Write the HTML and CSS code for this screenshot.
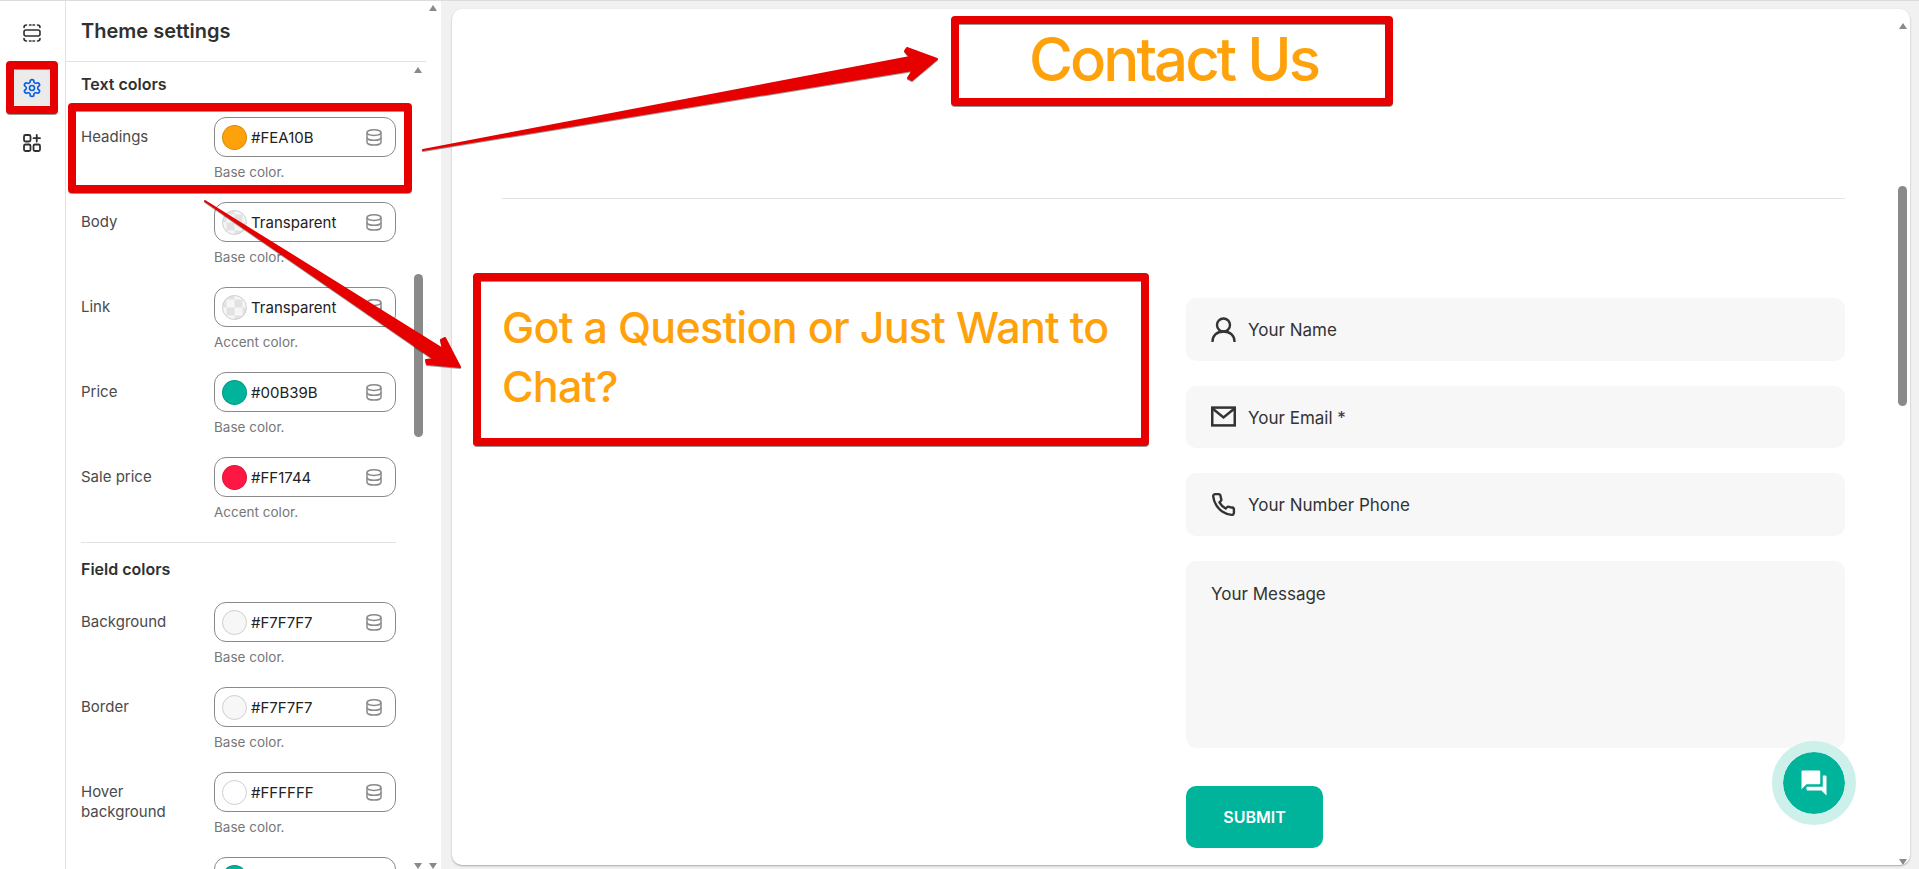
FILE: index.html
```html
<!DOCTYPE html>
<html lang="en">
<head>
  <meta charset="UTF-8" />
  <title>Theme settings</title>
  <link rel="stylesheet" href="styles.css">
</head>
<body>

  <svg class="defs" width="0" height="0">
    <symbol id="db" viewBox="0 0 16 17">
      <g fill="none" stroke="currentColor" stroke-width="1.5">
        <ellipse cx="8" cy="3.6" rx="7" ry="2.8" />
        <path d="M1 3.6v9.6c0 1.6 3.1 2.9 7 2.9s7-1.300 7-2.900V3.600" />
        <path d="M1 8.400c0 1.600 3.100 2.900 7 2.900s7-1.300 7-2.900" />
      </g>
    </symbol>
  </svg>

  <div class="app">

    <nav class="rail">
      <a class="rail-btn">
        <svg width="20" height="20" viewBox="0 0 20 20" fill="none" stroke="#303030" stroke-width="1.600" stroke-linecap="round">
          <rect x="2" y="7" width="16" height="6" rx="2" />
          <path d="M2 4.500c0-1.400.9-2.500 2.500-2.500M7.500 2h1.500M11 2h1.500M15.500 2c1.600 0 2.500 1.100 2.500 2.500" />
          <path d="M2 15.500c0 1.400.9 2.500 2.500 2.500M7.500 18h1.500M11 18h1.500M15.500 18c1.600 0 2.500-1.100 2.500-2.500" />
        </svg>
      </a>
      <a class="rail-btn active">
        <svg width="20" height="20" viewBox="0 0 24 24" fill="none" stroke="#0b5fdc" stroke-width="2" stroke-linecap="round" stroke-linejoin="round">
          <path d="M12.220 2h-.44a2 2 0 0 0-2 2v.18a2 2 0 0 1-1 1.730l-.43.25a2 2 0 0 1-2 0l-.15-.08a2 2 0 0 0-2.730.73l-.22.38a2 2 0 0 0 .73 2.730l.15.1a2 2 0 0 1 1 1.720v.51a2 2 0 0 1-1 1.740l-.15.09a2 2 0 0 0-.73 2.730l.22.38a2 2 0 0 0 2.730.73l.15-.08a2 2 0 0 1 2 0l.43.25a2 2 0 0 1 1 1.730V20a2 2 0 0 0 2 2h.44a2 2 0 0 0 2-2v-.18a2 2 0 0 1 1-1.730l.43-.25a2 2 0 0 1 2 0l.15.08a2 2 0 0 0 2.730-.73l.22-.39a2 2 0 0 0-.73-2.730l-.15-.08a2 2 0 0 1-1-1.740v-.5a2 2 0 0 1 1-1.740l.15-.09a2 2 0 0 0 .73-2.730l-.22-.38a2 2 0 0 0-2.730-.73l-.15.08a2 2 0 0 1-2 0l-.43-.25a2 2 0 0 1-1-1.730V4a2 2 0 0 0-2-2z" />
          <circle cx="12" cy="12" r="3" />
        </svg>
      </a>
      <a class="rail-btn">
        <svg width="20" height="20" viewBox="0 0 20 20" fill="none" stroke="#303030" stroke-width="1.800" stroke-linecap="round">
          <rect x="2" y="2" width="6.500" height="6.500" rx="1.500" />
          <rect x="2" y="11.500" width="6.500" height="6.500" rx="1.500" />
          <rect x="11.500" y="11.500" width="6.500" height="6.500" rx="1.500" />
          <path d="M11.500 5.200h6.500M14.750 2v6.500" />
        </svg>
      </a>
    </nav>

    <aside class="sidebar">
      <h2 class="side-title">Theme settings</h2>

      <div class="side-scroll">
        <h3 class="group-title">Text colors</h3>

        <div class="setting">
          <label>Headings</label>
          <div>
            <div class="field"><span class="swatch orange"></span><span class="val">#FEA10B</span><svg class="db"><use href="#db" /></svg></div>
            <p class="help">Base color.</p>
          </div>
        </div>
        <div class="setting">
          <label>Body</label>
          <div>
            <div class="field"><span class="swatch clear"></span><span class="val">Transparent</span><svg class="db"><use href="#db" /></svg></div>
            <p class="help">Base color.</p>
          </div>
        </div>
        <div class="setting">
          <label>Link</label>
          <div>
            <div class="field"><span class="swatch clear"></span><span class="val">Transparent</span><svg class="db"><use href="#db" /></svg></div>
            <p class="help">Accent color.</p>
          </div>
        </div>
        <div class="setting">
          <label>Price</label>
          <div>
            <div class="field"><span class="swatch teal"></span><span class="val">#00B39B</span><svg class="db"><use href="#db" /></svg></div>
            <p class="help">Base color.</p>
          </div>
        </div>
        <div class="setting">
          <label>Sale price</label>
          <div>
            <div class="field"><span class="swatch red"></span><span class="val">#FF1744</span><svg class="db"><use href="#db" /></svg></div>
            <p class="help">Accent color.</p>
          </div>
        </div>

        <hr class="side-rule" />

        <h3 class="group-title">Field colors</h3>

        <div class="setting">
          <label>Background</label>
          <div>
            <div class="field"><span class="swatch grey"></span><span class="val">#F7F7F7</span><svg class="db"><use href="#db" /></svg></div>
            <p class="help">Base color.</p>
          </div>
        </div>
        <div class="setting">
          <label>Border</label>
          <div>
            <div class="field"><span class="swatch grey"></span><span class="val">#F7F7F7</span><svg class="db"><use href="#db" /></svg></div>
            <p class="help">Base color.</p>
          </div>
        </div>
        <div class="setting">
          <label>Hover background</label>
          <div>
            <div class="field"><span class="swatch white"></span><span class="val">#FFFFFF</span><svg class="db"><use href="#db" /></svg></div>
            <p class="help">Base color.</p>
          </div>
        </div>
        <div class="setting">
          <label></label>
          <div>
            <div class="field"><span class="swatch teal"></span></div>
          </div>
        </div>
      </div>

      <!-- fake scrollbars -->
      <i class="arrow up outer-top"></i>
      <i class="arrow up inner-top"></i>
      <i class="arrow down inner-bottom"></i>
      <i class="arrow down outer-bottom"></i>
      <i class="thumb side-thumb"></i>
    </aside>

    <main class="canvas">
      <div class="preview">
        <h1 class="page-title">Contact Us</h1>
        <hr class="page-rule" />

        <section class="contact">
          <h2 class="contact-title">Got a Question or Just Want to Chat?</h2>

          <form class="contact-form">
            <div class="input">
              <svg width="25" height="25" viewBox="0 0 25 25" fill="none" stroke="#333" stroke-width="2.400" stroke-linecap="round"><circle cx="12.500" cy="8" r="6.500" /><path d="M1.500 24.500c0-5.500 4-10 11-10s11 4.500 11 10" /></svg>
              <span>Your Name</span>
            </div>
            <div class="input">
              <svg width="25" height="25" viewBox="0 0 25 25" fill="none" stroke="#333" stroke-width="2.500"><rect x="1.250" y="3.600" width="22.500" height="17.800" /><path d="M1.500 4.500l11 9 11-9" /></svg>
              <span>Your Email *</span>
            </div>
            <div class="input">
              <svg width="25" height="25" viewBox="0 0 24 24" fill="none" stroke="#333" stroke-width="2.300" stroke-linecap="round" stroke-linejoin="round"><path d="M22 16.920v3a2 2 0 0 1-2.180 2 19.790 19.790 0 0 1-8.630-3.070 19.500 19.500 0 0 1-6-6 19.790 19.790 0 0 1-3.070-8.670A2 2 0 0 1 4.110 2h3a2 2 0 0 1 2 1.720 12.840 12.840 0 0 0 .7 2.810 2 2 0 0 1-.45 2.110L8.090 9.910a16 16 0 0 0 6 6l1.270-1.270a2 2 0 0 1 2.110-.45 12.840 12.840 0 0 0 2.810.7A2 2 0 0 1 22 16.920z" /></svg>
              <span>Your Number Phone</span>
            </div>
            <div class="input message"><span>Your Message</span></div>
            <button class="submit" type="button">SUBMIT</button>
          </form>
        </section>

        <i class="arrow up page-top"></i>
        <i class="arrow down page-bottom"></i>
        <i class="thumb page-thumb"></i>

        <div class="chat">
          <svg width="30" height="30" viewBox="0 0 24 24" fill="#fff"><path d="M21 6h-2v9H6v2c0 .55.45 1 1 1h11l4 4V7c0-.55-.45-1-1-1zm-4 6V3c0-.55-.45-1-1-1H3c-.55 0-1 .45-1 1v14l4-4h10c.55 0 1-.45 1-1z" /></svg>
        </div>
      </div>
    </main>
  </div>

  <!-- red callouts drawn on top of the screenshot -->
  <svg class="callouts" width="1919" height="869" viewBox="0 0 1919 869">
    <g fill="none" stroke="#e60000" stroke-width="8" stroke-linejoin="round">
      <rect x="10" y="65" width="44" height="45" />
      <rect x="72" y="107" width="336" height="82" />
      <rect x="955" y="20" width="434" height="82" />
      <rect x="477" y="277" width="668" height="165" />
    </g>
    <g fill="#e60000" stroke="#e60000" stroke-width="2" stroke-linejoin="round">
      <polygon points="423,150 910,57 905,51 907,48 937,59 912,80 908,78 913,70" />
      <polygon points="205,201 443,349 441,340 445,338 460,367 427,364 426,360 434,359" />
    </g>
  </svg>

</body>
</html>
```

FILE: styles.css
```css
:root {
  --teal: #00b39b;
  --orange: #fea10b;
  --line: #e3e3e3;
  --ink: #303030;
  --bar: #8a8a8a;
}
* {
  box-sizing: border-box;
}
html, body {
  margin: 0;
  height: 100%;
  overflow: hidden;
}
body {
  font-family: 'Inter', sans-serif;
  color: var(--ink);
  background: #f1f1f1;
}
.defs {
  position: absolute;
}
.app {
  display: flex;
  height: 869px;
  border-top: 1px solid #dcdcdc;
}

/* left icon rail */
.rail {
  width: 66px;
  flex: none;
  background: #fff;
  border-right: 1px solid var(--line);
  display: flex;
  flex-direction: column;
  align-items: center;
  padding-top: 13px;
  padding-right: 1px;
  gap: 18px;
}
.rail-btn {
  width: 36px;
  height: 37px;
  display: flex;
  align-items: center;
  justify-content: center;
  border-radius: 4px;
}
.rail-btn.active {
  background: #ebebeb;
}

/* settings column */
.sidebar {
  position: relative;
  width: 375px;
  flex: none;
  background: #fff;
  padding-right: 15px;
  overflow: hidden;
}
.side-title {
  margin: 0;
  height: 61px;
  padding-left: 15px;
  line-height: 61px;
  font-size: 20px;
  font-weight: 600;
  border-bottom: 1px solid var(--line);
}
.side-scroll {
  padding: 12px 30px 0 15px;
}
.group-title {
  margin: 0 0 23px;
  font-size: 16px;
  line-height: 20px;
  font-weight: 600;
}
.setting {
  display: grid;
  grid-template-columns: 110px 182px;
  column-gap: 23px;
  margin-bottom: 21px;
}
.setting label {
  padding-top: 10px;
  font-size: 15px;
  line-height: 20px;
  color: #4a4a4a;
}
.field {
  height: 40px;
  display: flex;
  align-items: center;
  padding: 0 13px 0 7px;
  border: 1px solid #8a8a8a;
  border-radius: 12px;
}
.swatch {
  width: 25px;
  height: 25px;
  flex: none;
  border-radius: 50%;
  border: 1px solid rgba(0,0,0,0.15);
}
.swatch.orange { background: #fea10b; }
.swatch.teal   { background: #00b39b; }
.swatch.red    { background: #ff1744; }
.swatch.grey   { background: #f7f7f7; border-color: #cfcfcf; }
.swatch.white  { background: #fff; border-color: #cfcfcf; }
.swatch.clear {
  border-color: #cfcfcf;
  background: repeating-conic-gradient(#e2e2e2 0 25%, #f6f6f6 0 50%) center / 16px 16px;
}
.val {
  flex: 1;
  margin-left: 4px;
  font-size: 15px;
  color: #222;
}
.db {
  width: 16px;
  height: 17px;
  color: var(--bar);
}
.help {
  margin: 6px 0 0;
  font-size: 13.500px;
  line-height: 18px;
  color: #777;
}
.side-rule {
  width: 315px;
  margin: 0 0 16px;
  border: 0;
  border-top: 1px solid var(--line);
}

/* scrollbar bits */
.arrow {
  position: absolute;
  width: 0;
  height: 0;
  border-left: 4.5px solid transparent;
  border-right: 4.5px solid transparent;
}
.arrow.up { border-bottom: 6px solid var(--bar); }
.arrow.down { border-top: 6px solid var(--bar); }
.thumb {
  position: absolute;
  width: 9px;
  background: var(--bar);
  border-radius: 4.5px;
}
.outer-top { left: 363px; top: 4px; }
.inner-top { left: 348px; top: 66px; }
.inner-bottom { left: 348px; top: 862px; }
.outer-bottom { left: 363px; top: 862px; }
.side-thumb { left: 348px; top: 273px; height: 163px; }

/* store preview */
.canvas {
  flex: 1;
  min-width: 0;
  padding: 8px 9px 3px 11px;
}
.preview {
  position: relative;
  height: 856px;
  background: #fff;
  border-radius: 10px;
  padding: 14px 65px 0 50px;
  box-shadow: 0 1px 2px rgba(0,0,0,0.3);
  overflow: hidden;
}
.page-title {
  margin: 0;
  text-align: center;
  font-size: 60px;
  line-height: 72px;
  font-weight: 450;
  letter-spacing: -3px;
  color: var(--orange);
}
.page-rule {
  margin: 103px 0 99px;
  border: 0;
  border-top: 1px solid var(--line);
}
.contact {
  display: grid;
  grid-template-columns: 1fr 659px;
  column-gap: 40px;
}
.contact-title {
  margin: 0;
  font-size: 43px;
  line-height: 59px;
  font-weight: 450;
  letter-spacing: -0.700px;
  color: var(--orange);
}
.contact-form {
  display: flex;
  flex-direction: column;
  gap: 25px;
}
.input {
  height: 62.500px;
  display: flex;
  align-items: center;
  gap: 12px;
  padding-left: 25px;
  background: #f7f7f7;
  border-radius: 10px;
  font-size: 17px;
  color: #333;
}
.input span {
  padding-top: 2px;
}
.input.message {
  height: 187.500px;
  align-items: flex-start;
  padding-top: 21px;
}
.submit {
  width: 137px;
  height: 62px;
  margin-top: 13px;
  border: 0;
  border-radius: 10px;
  background: var(--teal);
  color: #fff;
  font-family: 'Inter', sans-serif;
  font-size: 16px;
  font-weight: 600;
}
.page-top { left: 1447px; top: 14px; }
.page-bottom { left: 1447px; top: 850px; }
.page-thumb { left: 1446px; top: 177px; height: 220px; }
.chat {
  position: absolute;
  right: 54px;
  bottom: 40px;
  width: 84px;
  height: 84px;
  display: flex;
  align-items: center;
  justify-content: center;
  border-radius: 50%;
  background: var(--teal);
  background-clip: padding-box;
  border: 11px solid #cdf0ea;
}
.callouts {
  position: absolute;
  left: 0;
  top: 0;
  pointer-events: none;
  filter: drop-shadow(0 1px 0.500px rgba(0,0,0,0.4));
}
```
